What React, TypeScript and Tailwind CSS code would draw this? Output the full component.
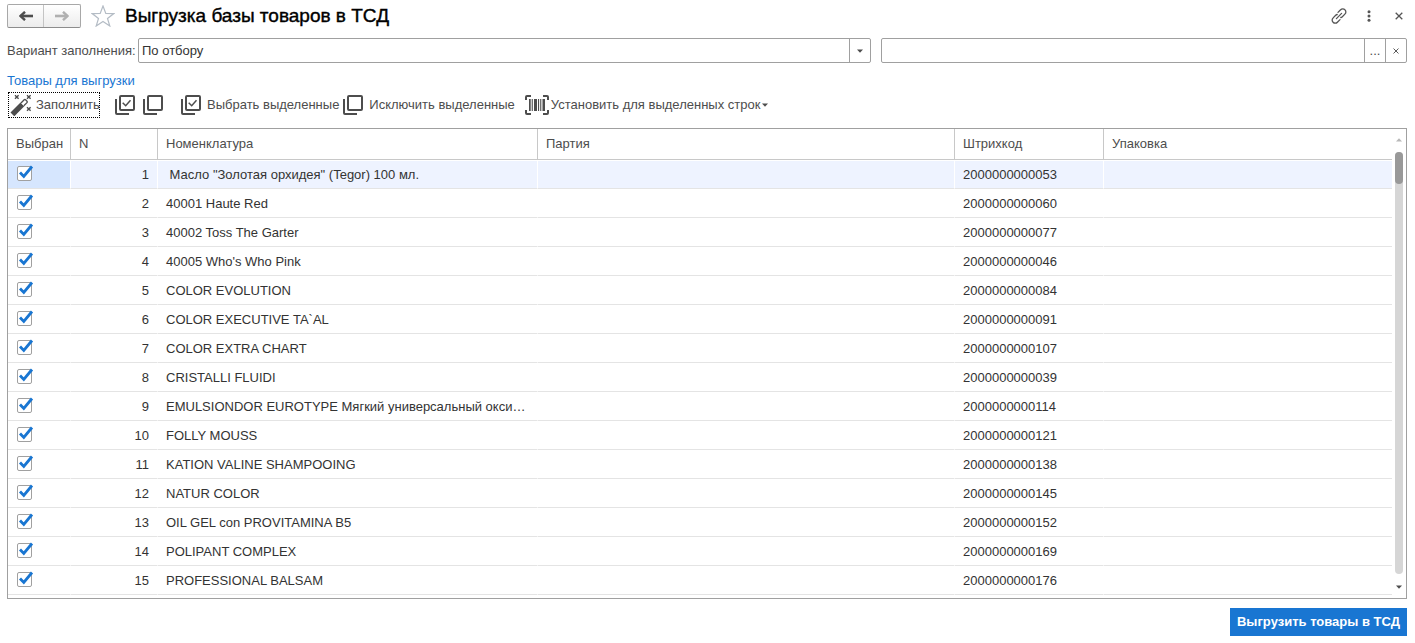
import { useState } from "react";
import clsx from "clsx";

const products = [
  { name: "\u00a0Масло \"Золотая орхидея\" (Tegor) 100 мл.", barcode: "2000000000053" },
  { name: "40001 Haute Red", barcode: "2000000000060" },
  { name: "40002 Toss The Garter", barcode: "2000000000077" },
  { name: "40005 Who's Who Pink", barcode: "2000000000046" },
  { name: "COLOR EVOLUTION", barcode: "2000000000084" },
  { name: "COLOR EXECUTIVE TA`AL", barcode: "2000000000091" },
  { name: "COLOR EXTRA CHART", barcode: "2000000000107" },
  { name: "CRISTALLI FLUIDI", barcode: "2000000000039" },
  { name: "EMULSIONDOR EUROTYPE Мягкий универсальный окси…", barcode: "2000000000114" },
  { name: "FOLLY MOUSS", barcode: "2000000000121" },
  { name: "KATION VALINE SHAMPOOING", barcode: "2000000000138" },
  { name: "NATUR COLOR", barcode: "2000000000145" },
  { name: "OIL GEL con PROVITAMINA B5", barcode: "2000000000152" },
  { name: "POLIPANT COMPLEX", barcode: "2000000000169" },
  { name: "PROFESSIONAL BALSAM", barcode: "2000000000176" },
];

const columns = [
  { title: "Выбран", width: "w-[63px]" },
  { title: "N", width: "w-[87px]" },
  { title: "Номенклатура", width: "w-[380px]" },
  { title: "Партия", width: "" },
  { title: "Штрихкод", width: "w-[149px]" },
  { title: "Упаковка", width: "w-[288px]" },
];

function ArrowIcon({ className }: { className?: string }) {
  return (
    <svg viewBox="0 0 14 10" className={clsx("h-[10px] w-[14px]", className)} fill="none" stroke="currentColor">
      <path d="M1.5 5H14" strokeWidth="2.6" />
      <path d="M6 0.8 1.6 5 6 9.2" strokeWidth="2.4" />
    </svg>
  );
}

function StarIcon() {
  return (
    <svg viewBox="0 0 24 22" className="h-[22px] w-6" fill="none" stroke="#b4bcc5" strokeWidth="1.2">
      <path d="M12 1 14.8 8.4 22.8 8.6 16.5 13.4 18.8 21 12 16.5 5.2 21 7.5 13.4 1.2 8.6 9.2 8.4Z" />
    </svg>
  );
}

function LinkIcon() {
  return (
    <svg viewBox="0 0 16 16" className="size-4" fill="none" stroke="#555" strokeWidth="1.3" strokeLinecap="round">
      <path d="M7 4.4 9.6 1.8a2.9 2.9 0 0 1 4.3 0 2.9 2.9 0 0 1 0 4.3L11.3 8.7a2.9 2.9 0 0 1-1.5.8" />
      <path d="M9 11.6 6.4 14.2a2.9 2.9 0 0 1-4.3 0 2.9 2.9 0 0 1 0-4.3L4.7 7.3a2.9 2.9 0 0 1 1.5-.8" />
      <path d="M5.4 10.6 10.6 5.4" />
    </svg>
  );
}

function CrossIcon({ className }: { className?: string }) {
  return (
    <svg viewBox="0 0 8 8" className={className} fill="none" stroke="#555" strokeWidth="1.3">
      <path d="M.7.7 7.3 7.3M7.3.7.7 7.3" />
    </svg>
  );
}

function WandIcon() {
  return (
    <svg viewBox="0 0 22 22" className="size-[22px] shrink-0" fill="none" stroke="#4d4d4d">
      <path d="M2.4 20.4 12.4 10.4" strokeWidth="5.4" />
      <path d="M11 9 14.2 5.8a1 1 0 0 1 1.4 0L17 7.2a1 1 0 0 1 0 1.4L13.8 11.8" strokeWidth="1.3" fill="#fff" />
      <path
        d="M5 1.2 8.6 4.8M8.6 1.2 5 4.8M17 1.2 20.6 4.8M20.6 1.2 17 4.8M17 13.2 20.6 16.8M20.6 13.2 17 16.8"
        strokeWidth="1.4"
      />
    </svg>
  );
}

function StackIcon({ checked = false }: { checked?: boolean }) {
  return (
    <svg viewBox="0 0 20 20" className="size-5" fill="none" stroke="#4d4d4d" strokeWidth="2">
      <rect x="5" y="1" width="14" height="14" rx="1" />
      <path d="M1 4V18a1 1 0 0 0 1 1H14" />
      {checked && <path d="M7.7 7.7 10.7 10.7 15.5 5.3" strokeWidth="1.5" />}
    </svg>
  );
}

function BarcodeIcon() {
  return (
    <svg viewBox="0 0 24 20" className="h-5 w-6" fill="none" stroke="#4d4d4d" strokeWidth="2">
      <path d="M6 1H2a1 1 0 0 0-1 1V5M18 1H22a1 1 0 0 1 1 1V5M6 19H2a1 1 0 0 1-1-1V15M18 19H22a1 1 0 0 0 1-1V15" />
      <path
        d="M4 4h1.7v12H4zM6.7 4h1.1v12H6.7zM9 4h3v12H9zM13 4h1.1v12H13zM15.2 4h1.1v12h-1.1zM17.5 4H20v12h-2.5z"
        fill="#4d4d4d"
        stroke="none"
      />
    </svg>
  );
}

function Caret({ className }: { className?: string }) {
  return (
    <svg viewBox="0 0 6 4" className={clsx("h-1 w-[6px]", className)} fill="currentColor">
      <path d="M0 .5H6L3 3.7Z" />
    </svg>
  );
}

function RowCheckbox({ label }: { label: string }) {
  return (
    <label className="relative ml-px block w-fit pb-[2px]">
      <input
        type="checkbox"
        defaultChecked
        aria-label={label}
        className="peer block size-[15px] appearance-none rounded-xs border border-[#a0a0a0] bg-white"
      />
      <svg
        viewBox="0 0 18 18"
        className="pointer-events-none absolute -top-px -left-px hidden size-[18px] peer-checked:block"
        fill="none"
        stroke="#1976d2"
        strokeWidth="2.8"
      >
        <path d="M4 7.5 7.8 11.5 16 1.5" />
      </svg>
    </label>
  );
}

function TitleBar() {
  return (
    <header className="flex h-6 items-center">
      <div className="flex h-6 rounded-xs border border-[#a8a8a8] border-b-[#8c8c8c] bg-linear-to-b from-white to-[#ececec]">
        <button aria-label="Назад" className="flex w-9 items-center justify-center border-r border-[#c4c4c4] text-[#4d4d4d]">
          <ArrowIcon />
        </button>
        <button aria-label="Вперед" className="flex w-9 items-center justify-center text-[#b0b0b0]">
          <ArrowIcon className="rotate-180" />
        </button>
      </div>
      <button aria-label="В избранное" className="ml-[10px]">
        <StarIcon />
      </button>
      <h1 className="ml-[10px] text-[19px] text-black [-webkit-text-stroke:0.4px_black]">Выгрузка базы товаров в ТСД</h1>
      <div className="mr-1 ml-auto flex items-center">
        <button aria-label="Получить ссылку">
          <LinkIcon />
        </button>
        <button aria-label="Еще" className="ml-5">
          <svg viewBox="0 0 4 12" className="h-3 w-1" fill="#555">
            <circle cx="2" cy="1.8" r="1.5" />
            <circle cx="2" cy="6" r="1.5" />
            <circle cx="2" cy="10.2" r="1.5" />
          </svg>
        </button>
        <button aria-label="Закрыть" className="ml-6">
          <CrossIcon className="size-2" />
        </button>
      </div>
    </header>
  );
}

function FilterRow() {
  const [value, setValue] = useState("");

  return (
    <div className="mt-[10px] flex h-[25px] items-center">
      <label htmlFor="variant" className="w-[131px] shrink-0 whitespace-nowrap">
        Вариант заполнения:
      </label>
      <div className="relative h-full flex-[734_1_0%]">
        <select
          id="variant"
          className="size-full appearance-none rounded-xs border border-[#a0a0a0] bg-white pr-6 pl-[3px] text-[#333]"
        >
          <option>По отбору</option>
        </select>
        <span className="pointer-events-none absolute inset-y-0 right-0 flex w-[22px] items-center justify-center border-l border-[#a0a0a0]">
          <Caret />
        </span>
      </div>
      <div className="ml-[10px] flex h-full flex-[525_1_0%] rounded-xs border border-[#a0a0a0]">
        <input
          aria-label="Значение отбора"
          value={value}
          onChange={(e) => setValue(e.target.value)}
          className="min-w-0 flex-1 px-1 outline-none"
        />
        <button aria-label="Выбрать" className="w-[21px] border-l border-[#a0a0a0]">
          ...
        </button>
        <button
          aria-label="Очистить"
          onClick={() => setValue("")}
          className="flex w-[21px] items-center justify-center border-l border-[#a0a0a0]"
        >
          <CrossIcon className="size-[6px]" />
        </button>
      </div>
    </div>
  );
}

function Toolbar() {
  return (
    <div className="mt-[3px] flex h-[26px] items-center whitespace-nowrap">
      <button className="ml-px flex h-full w-[92px] items-center gap-1 border border-dotted border-black pl-px">
        <WandIcon />
        Заполнить
      </button>
      <button aria-label="Выбрать все" className="ml-[15px]">
        <StackIcon checked />
      </button>
      <button aria-label="Исключить все" className="ml-2">
        <StackIcon />
      </button>
      <button className="ml-[18px] flex items-center gap-[6px]">
        <StackIcon checked />
        Выбрать выделенные
      </button>
      <button className="ml-1 flex items-center gap-[6px]">
        <StackIcon />
        Исключить выделенные
      </button>
      <button className="ml-[10px] flex items-center gap-[2px]">
        <BarcodeIcon />
        Установить для выделенных строк
        <Caret />
      </button>
    </div>
  );
}

function ProductTable() {
  const [selected, setSelected] = useState(0);

  return (
    <div className="mt-[10px] flex border border-[#a0a0a0] pb-[3px]">
      <div className="min-w-0 flex-1">
        <table id="products" className="w-full table-fixed border-separate border-spacing-0 text-left">
          <thead>
            <tr>
              {columns.map((col) => (
                <th
                  key={col.title}
                  className={clsx(
                    "h-[31px] border-r border-b border-[#c8c8c8] pl-2 font-normal last:border-r-0",
                    col.width
                  )}
                >
                  {col.title}
                </th>
              ))}
            </tr>
          </thead>
          <tbody className="text-[#333]">
            {products.map((item, i) => (
              <tr
                key={item.barcode}
                onClick={() => setSelected(i)}
                className={clsx(
                  "[&>td]:h-[29px] [&>td]:border-t [&>td]:border-r [&>td]:border-b [&>td]:border-t-white [&>td]:border-r-white [&>td]:border-b-[#e4e4e4] [&>td]:px-2 [&>td:last-child]:border-r-0",
                  i === selected && "bg-[#eef3ff]"
                )}
              >
                <td className={clsx(i === selected && "bg-[#d6e6fe]")}>
                  <RowCheckbox label={item.name} />
                </td>
                <td className="text-right">{i + 1}</td>
                <td className="truncate">{item.name}</td>
                <td />
                <td>{item.barcode}</td>
                <td />
              </tr>
            ))}
          </tbody>
        </table>
      </div>

      {/* Scrollbar */}
      <div className="flex w-[14px] flex-col items-center pt-[9px] pb-[6px]">
        <Caret className="rotate-180 text-[#b8b8b8]" />
        <div className="mt-[10px] w-2 flex-1 rounded-full bg-[#d6d6d6]">
          <div className="h-8 rounded-full bg-[#999]" />
        </div>
        <Caret className="mt-[11px]" />
      </div>
    </div>
  );
}

export default function App() {
  return (
    <main className="bg-white px-2 pt-1 pb-[7px] pl-[7px] font-['Liberation_Sans',Arial,sans-serif] text-[13px] leading-4 text-[#4d4d4d]">
      <TitleBar />
      <FilterRow />
      <a href="#products" className="mt-[10px] block w-fit text-[#1976d2]">
        Товары для выгрузки
      </a>
      <Toolbar />
      <ProductTable />
      <footer className="mt-[9px] flex justify-end">
        <button className="h-7 bg-[#1976d2] px-[7px] font-bold text-white">Выгрузить товары в ТСД</button>
      </footer>
    </main>
  );
}
